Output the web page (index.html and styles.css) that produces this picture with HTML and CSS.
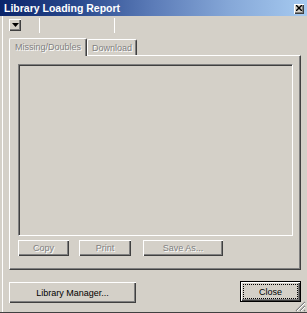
FILE: index.html
```html
<!DOCTYPE html>
<html>
<head>
<meta charset="utf-8">
<link rel="stylesheet" href="styles.css">
</head>
<body>
<div class="window">
  <div class="titlebar">
    <span class="title">Library Loading Report</span>
    <span class="tclose"><svg width="8" height="7" viewBox="0 0 8 7"><path d="M1 0h1l2 2 2-2h1v1l-2 2 2 2v1h-1l-2-2-2 2h-1v-1l2-2-2-2z" fill="#000"/></svg></span>
  </div>
  <div class="client">
    <div class="toolbar">
      <span class="ddbtn"><svg width="7" height="4" viewBox="0 0 7 4"><path d="M0 0h7l-3.5 4z" fill="#000"/></svg></span>
      <span class="sep sep1"></span>
      <span class="sep sep2"></span>
    </div>
    <div class="tabctl">
      <div class="tabs">
        <div class="tab active"><span class="dis">Missing/Doubles</span></div>
        <div class="tab"><span class="dis">Download</span></div>
      </div>
      <div class="panel">
        <div class="listbox"></div>
        <div class="btnrow">
          <div class="btn b-copy"><span class="dis">Copy</span></div>
          <div class="btn b-print"><span class="dis">Print</span></div>
          <div class="btn b-save"><span class="dis">Save As...</span></div>
        </div>
      </div>
    </div>
    <div class="footer">
      <div class="btn b-lib">Library Manager...</div>
      <div class="btn b-close"><span class="focus">Close</span></div>
    </div>
  </div>
  <svg class="grip" width="11" height="11" viewBox="0 0 11 11">
    <path d="M10 1L1 10M10 5L5 10M10 9L9 10" stroke="#808080" stroke-width="1.2"/>
    <path d="M10 2L2 10M10 6L6 10" stroke="#fff" stroke-width="1"/>
  </svg>
</div>
</body>
</html>
```
FILE: styles.css
```css
html, body { margin: 0; padding: 0; background: #d4d0c8; }
.window {
  position: relative;
  width: 307px; height: 313px;
  box-sizing: border-box;
  background: #d4d0c8;
  border-bottom: 1px solid #404040;
  display: flex; flex-direction: column;
  font-family: "Liberation Sans", Arial, sans-serif;
  font-size: 9px;
  color: #000;
}
.titlebar {
  height: 16px; flex: none;
  background: linear-gradient(to right, #0a246a 0%, #2a4a8e 25%, #5c7cb8 50%, #86a8d8 75%, #a6caf0 100%);
  display: flex; align-items: center; justify-content: space-between;
  padding: 0 3px 0 4px;
}
.title { color: #fff; font-weight: bold; font-size: 10.5px; letter-spacing: 0; }
.tclose {
  width: 10px; height: 10px;
  background: #d4d0c8;
  box-shadow: inset 1px 1px #fff, inset -1px -1px #404040, inset -2px -2px #808080;
  display: flex; align-items: center; justify-content: center;
  margin-top: 1px;
}
.client {
  flex: 1;
  margin-left: 2px;
  border-left: 1px solid #fff;
  display: flex; flex-direction: column;
}
.toolbar { height: 19px; display: flex; align-items: flex-start; padding-left: 6px; flex: none; }
.ddbtn {
  width: 12px; height: 12px; margin-top: 3px;
  box-sizing: border-box;
  background: #d4d0c8;
  box-shadow: inset 1px 1px #fff, inset -1px -1px #404040, inset -2px -2px #808080;
  display: flex; align-items: center; justify-content: center;
}
.sep { width: 1px; height: 15px; margin-top: 2px; background: #fff; }
.sep1 { margin-left: 18px; }
.sep2 { margin-left: 74px; }
.tabctl { margin: 3px 6px 0 6px; flex: none; }
.tabs { display: flex; align-items: flex-end; height: 17px; }
.tab {
  box-sizing: border-box;
  height: 16px;
  border-top: 1px solid #fff; border-left: 1px solid #fff; border-right: 1px solid #404040;
  box-shadow: inset -1px 0 #808080;
  border-radius: 2px 2px 0 0;
  display: flex; align-items: center; justify-content: center;
  width: 50px;
}
.tab.active {
  width: 78px; height: 18px;
  margin-bottom: -1px;
  position: relative; z-index: 1;
  background: #d4d0c8;
  padding-bottom: 2px;
}
.dis { color: #808080; text-shadow: 1px 1px 0 #fff; }
.panel {
  box-sizing: border-box;
  height: 215px;
  border-top: 1px solid #fff; border-left: 1px solid #fff;
  border-right: 1px solid #404040; border-bottom: 1px solid #404040;
  box-shadow: inset -1px -1px #808080;
  padding: 8px 7px 0 8px;
}
.listbox {
  box-sizing: border-box;
  height: 172px;
  border-top: 1px solid #808080; border-left: 1px solid #808080;
  border-right: 1px solid #fff; border-bottom: 1px solid #fff;
  box-shadow: inset 1px 1px #404040;
}
.btnrow { display: flex; margin-top: 4px; }
.btn {
  box-sizing: border-box;
  background: #d4d0c8;
  box-shadow: inset 1px 1px #fff, inset -1px -1px #404040, inset -2px -2px #808080;
  display: flex; align-items: center; justify-content: center;
}
.btnrow .btn { height: 16px; }
.b-copy { width: 51px; }
.b-print { width: 52px; margin-left: 10px; }
.b-save { width: 80px; margin-left: 12px; }
.footer { display: flex; justify-content: space-between; align-items: flex-start; margin: 12px 6px 0 6px; }
.b-lib { width: 127px; height: 21px; }
.b-close {
  width: 61px; height: 21px; margin-top: -1px;
  border: 1px solid #000;
  padding: 2px;
}
.focus {
  flex: 1; align-self: stretch;
  border: 1px dotted #000;
  display: flex; align-items: center; justify-content: center;
}
.grip { position: absolute; right: 1px; bottom: 0; }
```
